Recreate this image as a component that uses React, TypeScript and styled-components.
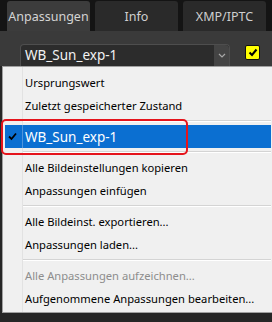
import styled, { createGlobalStyle } from "styled-components";

const GlobalStyle = createGlobalStyle`
  html, body { margin: 0; padding: 0; background: #1e1e1e; }
  body { font-family: "Noto Sans", "Open Sans", sans-serif; }
`;

const Screen = styled.div`
  width: 272px;
  height: 322px;
  background: #262626;
  overflow: hidden;
  display: flex;
  flex-direction: column;
`;

const TabBar = styled.div`
  display: flex;
  gap: 5px;
  padding: 1px 0 0 7px;
  height: 30px;
  background: #141414;
`;

const Tab = styled.div<{ $active?: boolean }>`
  width: 83px;
  height: 30px;
  border-radius: 3px 3px 0 0;
  background: ${(p) => (p.$active ? "#3c3c3c" : "#2a2a2a")};
  color: ${(p) => (p.$active ? "#d4d4d4" : "#cfcfcf")};
  font-size: 12.5px;
  display: flex;
  align-items: center;
  justify-content: center;
`;

const Panel = styled.div`
  background: #3a3a3a;
  height: 35px;
  display: flex;
  align-items: flex-end;
  padding-left: 20px;
`;

const Select = styled.div`
  width: 208px;
  height: 21px;
  border: 1px solid #4e4e4e;
  border-bottom: none;
  border-radius: 4px 4px 0 0;
  background: #2c2c2c;
  display: flex;
  align-items: stretch;
`;

const SelectText = styled.div`
  flex: 1;
  color: #f2f2f2;
  font-size: 13.5px;
  line-height: 21px;
  padding-left: 4px;
`;

const SelectArrow = styled.div`
  width: 15px;
  background: #444444;
  border-radius: 0 4px 0 0;
  display: flex;
  align-items: center;
  justify-content: center;
`;

const YellowBox = styled.div`
  width: 13px;
  height: 13px;
  margin: 0 0 6px 15px;
  background: #ffff00;
  border: 1px solid #111;
  border-radius: 2px;
  display: flex;
  align-items: center;
  justify-content: center;
`;

const Menu = styled.div`
  margin-left: 2px;
  width: 266px;
  background: #f0f0f0;
  border: 1px solid #a0a0a0;
  padding: 4px 1px 2px 2px;
  position: relative;
  background-image: linear-gradient(#e2e2e2, #e2e2e2);
  background-size: 1px 100%;
  background-position: 19px 0;
  background-repeat: no-repeat;
`;

const Item = styled.div<{ $selected?: boolean; $disabled?: boolean }>`
  position: relative;
  height: 23px;
  display: flex;
  align-items: center;
  padding-left: 20px;
  font-size: ${(p) => (p.$selected ? "13.5px" : "11.2px")};
  white-space: nowrap;
  color: ${(p) => (p.$selected ? "#ffffff" : p.$disabled ? "#8d8d8d" : "#000000")};
  background: ${(p) => (p.$selected ? "#0b6fd1" : "transparent")};
`;

const CheckMark = styled.svg`
  position: absolute;
  left: 3px;
  top: 7px;
`;

const Gutter = styled.div`
  position: absolute;
  left: 17px;
  top: 0;
  bottom: 0;
  width: 1px;
  background: #4f95dc;
`;

const Highlight = styled.div`
  position: absolute;
  left: -4px;
  top: -6px;
  width: 183px;
  height: 32px;
  border: 2px solid #e5141c;
  border-radius: 5px;
  pointer-events: none;
`;

const Separator = styled.div`
  height: 8px;
  display: flex;
  flex-direction: column;
  justify-content: center;
  padding-left: 18px;
  &::before {
    content: "";
    height: 1px;
    background: #d4d4d4;
  }
  &::after {
    content: "";
    height: 1px;
    background: #ffffff;
  }
`;

export default function App() {
  return (
    <>
      <GlobalStyle />
      <Screen>
        <TabBar>
          <Tab $active>Anpassungen</Tab>
          <Tab>Info</Tab>
          <Tab>XMP/IPTC</Tab>
        </TabBar>
        <Panel>
          <Select>
            <SelectText>WB_Sun_exp-1</SelectText>
            <SelectArrow>
              <svg width="8" height="5" viewBox="0 0 8 5">
                <path d="M1 1 L4 4 L7 1" fill="none" stroke="#a8a8a8" strokeWidth="1.2" />
              </svg>
            </SelectArrow>
          </Select>
          <YellowBox>
            <svg width="10" height="9" viewBox="0 0 10 9">
              <path d="M1.5 4.5 L4 7 L8.5 1.5" fill="none" stroke="#000" strokeWidth="2" />
            </svg>
          </YellowBox>
        </Panel>
        <Menu>
          <Item>Ursprungswert</Item>
          <Item>Zuletzt gespeicherter Zustand</Item>
          <Separator />
          <Item $selected>
            <CheckMark width="9" height="9" viewBox="0 0 9 9">
              <path d="M1 4.5 L3.5 7 L8 1.5" fill="none" stroke="#000" strokeWidth="1.8" />
            </CheckMark>
            <Gutter />
            WB_Sun_exp-1
            <Highlight />
          </Item>
          <Separator />
          <Item>Alle Bildeinstellungen kopieren</Item>
          <Item>Anpassungen einfügen</Item>
          <Separator />
          <Item>Alle Bildeinst. exportieren...</Item>
          <Item>Anpassungen laden...</Item>
          <Separator />
          <Item $disabled>Alle Anpassungen aufzeichnen...</Item>
          <Item>Aufgenommene Anpassungen bearbeiten...</Item>
        </Menu>
      </Screen>
    </>
  );
}
